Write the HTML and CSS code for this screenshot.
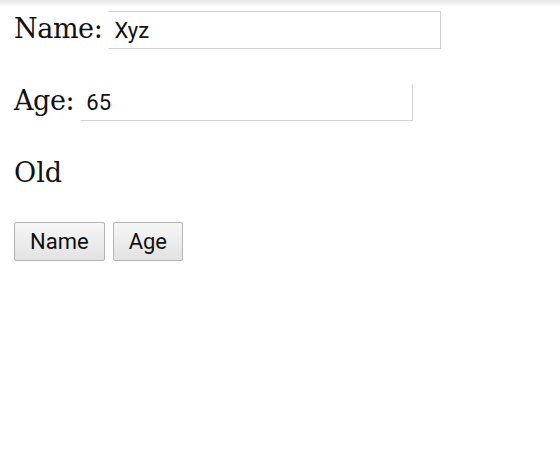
FILE: index.html
```html
<!DOCTYPE html>
<html>

<head>
    <title>Person</title>
    <link rel="stylesheet" href="styles.css">
</head>

<body>
    <div class="top-shadow"></div>

    <!--Person form-->
    <div class="person">
        <div class="field">
            <label for="name">Name:</label>
            <input type="text" id="name" class="name-input" value="Xyz">
        </div>
        <div class="field">
            <label for="age">Age:</label>
            <input type="text" id="age" class="age-input" value="65">
        </div>
        <div class="status">Old</div>
        <div class="buttons">
            <button class="btn">Name</button>
            <button class="btn">Age</button>
        </div>
    </div>
</body>

</html>
```

FILE: styles.css
```css
body {
    margin: 0;
    background-color: #fff;
    color: #111;
    font-family: "DejaVu Serif", serif;
    font-size: 27px;
}

/* shadow under the browser bar */
.top-shadow {
    position: fixed;
    top: 0;
    left: 0;
    right: 0;
    height: 7px;
    background: linear-gradient(#e6e6e6, rgba(255, 255, 255, 0));
}

.person {
    padding: 11px 14px;
}

.field {
    display: flex;
    align-items: baseline;
    margin-bottom: 35px;
}

.field label {
    margin-right: 6px;
    letter-spacing: -0.4px;
}

.field input {
    width: 333px;
    box-sizing: border-box;
    padding: 0 5px;
    font-family: Roboto, "Noto Sans", sans-serif;
    font-size: 22px;
    color: #111;
    background: #fff;
    border: 1px solid #d2d2d2;
    outline: none;
}

.name-input {
    height: 38px;
    border-left-color: #fff !important;
}

.age-input {
    height: 37px;
    border-top-color: #fff !important;
    border-left-color: #fff !important;
}

.status {
    line-height: 30px;
    margin-top: 37px;
}

.buttons {
    display: flex;
    gap: 8px;
    margin-top: 34px;
}

.btn {
    height: 39px;
    padding: 0 15px;
    font-family: Roboto, "Noto Sans", sans-serif;
    font-size: 22px;
    color: #111;
    background: linear-gradient(#f6f6f6, #e2e2e2);
    border: 1px solid #b4b4b4;
    border-radius: 2px;
}
```
